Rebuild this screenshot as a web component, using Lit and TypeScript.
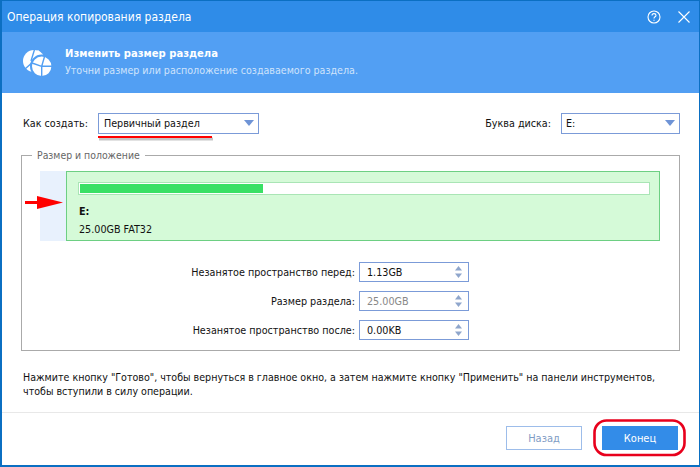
import { LitElement, html, css } from "lit";
import { customElement } from "lit/decorators.js";

const arrow = html`<svg class="caret" width="10" height="6" viewBox="0 0 10 6"><path d="M0 0H10L5 6Z" fill="#6f94d6"/></svg>`;
const spin = html`<svg class="spin" width="7" height="12" viewBox="0 0 7 12"><path d="M3.5 0L7 4.5H0Z" fill="#8fa6cc"/><path d="M0 7.5H7L3.5 12Z" fill="#8fa6cc"/></svg>`;

@customElement("app-root")
export class AppRoot extends LitElement {
  static styles = css`
    :host { display: block; width: 700px; height: 467px; font-family: "DejaVu Sans", sans-serif; font-stretch: condensed; font-size: 10.7px; color: #111; }
    .win { position: relative; box-sizing: border-box; width: 700px; height: 467px; border: solid #0b6fc2; border-width: 1px 1px 2px 2px; background: #fff; display: flex; flex-direction: column; overflow: hidden; }
    .title { height: 31px; flex: none; background: #2f8ce8; color: #fff; display: flex; align-items: center; padding: 0 9px 0 5px; font-size: 12px; }
    .title span { flex: 1; }
    .title svg { display: block; margin-left: 17px; }
    .head { height: 61px; flex: none; background: #529ff3; display: flex; align-items: center; padding-left: 20px; gap: 13px; color: #fff; }
    .head b { display: block; font-size: 11.15px; font-weight: 700; line-height: 16px; }
    .head small { display: block; font-size: 10.6px; line-height: 17px; color: #cfe3fb; }
    .body { flex: 1; padding: 20px 19px 0 19px; display: flex; flex-direction: column; }
    .top { display: flex; align-items: center; height: 20px; padding-left: 2px; }
    .top label { margin-right: 10px; }
    .top label.first { margin-right: 10px; }
    .spacer { flex: 1; }
    .sel { box-sizing: border-box; height: 21px; border: 1px solid #7b9bd8; display: flex; align-items: center; justify-content: space-between; padding: 0 4px 0 4px; }
    .s1 { width: 161px; padding-left: 5px; }
    .s2 { width: 119px; }
    .group { position: relative; margin-top: 22px; height: 196px; box-sizing: border-box; border: 1px solid #aaa; padding: 15px 19px 0 18px; }
    .legend { position: absolute; left: 10px; top: -8px; background: #fff; padding: 0 5px; color: #666; line-height: 14px; font-size: 10.4px; }
    .part { display: flex; height: 70px; }
    .gutter { width: 26px; background: #e8f1fd; }
    .green { flex: 1; box-sizing: border-box; border: 1px solid #6dcf83; background: #d5fad8; padding: 10px 9px 0 11px; }
    .track { height: 13px; box-sizing: border-box; background: #fff; border: 1px solid #a9e5b5; padding: 1px; }
    .fill { height: 100%; background: #39e065; }
    .green b { display: block; margin: 9px 0 0 1px; line-height: 16px; }
    .green div.t { margin: 2px 0 0 1px; line-height: 16px; }
    .form { margin-top: 21px; display: grid; grid-template-columns: 315px 110px; column-gap: 4px; row-gap: 9px; align-items: center; }
    .form label { text-align: right; }
    .inp { box-sizing: border-box; height: 20px; border: 1px solid #7b9bd8; display: flex; align-items: center; justify-content: space-between; padding: 0 6px 0 7px; }
    .inp.dis { color: #888; }
    .note { margin: 20px 0 0 2px; line-height: 13.5px; white-space: nowrap; font-size: 10.6px; }
    .foot { margin: 14px -19px 0 -19px; border-top: 1px solid #e8e8e8; display: flex; justify-content: flex-end; gap: 20px; padding: 13px 21px 0 0; }
    .btn { box-sizing: border-box; width: 76px; height: 24px; flex: none; display: flex; align-items: center; justify-content: center; font-size: 11px; }
    .back { border: 1px solid #9dbdea; color: #7f9cc4; }
    .end { background: #338ce8; color: #fff; }
    .over { position: absolute; left: -2px; top: -1px; pointer-events: none; }
  `;

  render() {
    return html`<div class="win">
      <div class="title">
        <span>Операция копирования раздела</span>
        <svg width="14" height="14" viewBox="0 0 14 14" fill="none" stroke="#fff" stroke-width="1.1"><circle cx="7" cy="7" r="6"/><path d="M5 5.6C5 4.3 6 3.6 7 3.6S9 4.3 9 5.4C9 6.8 7 6.8 7 8.4"/><path d="M7 9.7V10.8"/></svg>
        <svg width="12" height="12" viewBox="0 0 12 12" stroke="#fff" stroke-width="1.1"><path d="M.5.5L11.5 11.5M11.5.5L.5 11.5"/></svg>
      </div>
      <div class="head">
        <svg width="30" height="28" viewBox="0 0 30 28">
          <circle cx="12" cy="12" r="11" fill="#fff"/>
          <path d="M9 12L13 -1M3 20L12 12" stroke="#529ff3" stroke-width="1.4"/>
          <path d="M16 1L19 4L17 6L14.5 3Z" fill="#fff"/>
          <circle cx="19.7" cy="17.3" r="10.7" fill="#fff" stroke="#529ff3" stroke-width="2"/>
          <path d="M19.7 17.3V28M19.7 17.3H30M19.7 17.3L23 6M19.7 17.3L10 14" stroke="#529ff3" stroke-width="1.4"/>
        </svg>
        <div><b>Изменить размер раздела</b><small>Уточни размер или расположение создаваемого раздела.</small></div>
      </div>
      <div class="body">
        <div class="top">
          <label class="first">Как создать:</label>
          <div class="sel s1"><span>Первичный раздел</span>${arrow}</div>
          <div class="spacer"></div>
          <label>Буква диска:</label>
          <div class="sel s2"><span>E:</span>${arrow}</div>
        </div>
        <div class="group">
          <div class="legend">Размер и положение</div>
          <div class="part">
            <div class="gutter"></div>
            <div class="green">
              <div class="track"><div class="fill" style="width:32.2%"></div></div>
              <b>E:</b>
              <div class="t">25.00GB FAT32</div>
            </div>
          </div>
          <div class="form">
            <label>Незанятое пространство перед:</label><div class="inp"><span>1.13GB</span>${spin}</div>
            <label>Размер раздела:</label><div class="inp dis"><span>25.00GB</span>${spin}</div>
            <label>Незанятое пространство после:</label><div class="inp"><span>0.00KB</span>${spin}</div>
          </div>
        </div>
        <div class="note">Нажмите кнопку "Готово", чтобы вернуться в главное окно, а затем нажмите кнопку "Применить" на панели инструментов,<br>чтобы вступили в силу операции.</div>
        <div class="foot">
          <div class="btn back">Назад</div>
          <div class="btn end">Конец</div>
        </div>
      </div>
      <svg class="over" width="700" height="467" viewBox="0 0 700 467" fill="none">
        <path d="M98 137H212" stroke="#555" stroke-opacity=".35" stroke-width="3" transform="translate(1 2)"/>
        <path d="M98 137H212" stroke="#f00" stroke-width="2.2"/>
        <path d="M25 201H37V196L63 202.5L37 209V204H25Z" fill="#f00" />
        <rect x="594.5" y="420.5" width="90" height="34.5" rx="12" stroke="#e8001c" stroke-width="2.6"/>
      </svg>
    </div>`;
  }
}
